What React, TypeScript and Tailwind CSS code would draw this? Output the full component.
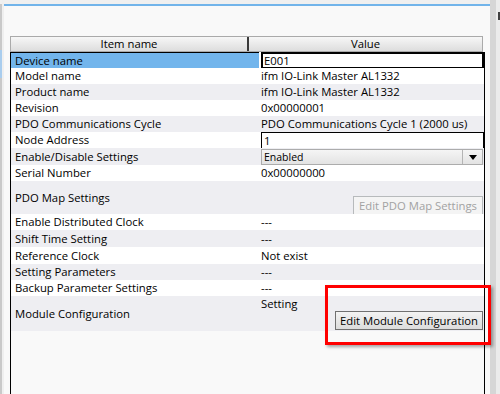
import { ReactNode } from "react"

type Row = {
  label: string
  h: string
  bg: string
  value?: ReactNode
  valueCls?: string
}

const white = "bg-white"
const grey = "bg-[#eeeef2]"

function DropArrow() {
  return (
    <svg width="8" height="5" viewBox="0 0 8 5">
      <path d="M0 0 L8 0 L4 5 Z" fill="#000" />
    </svg>
  )
}

const rows: Row[] = [
  {
    label: "Device name",
    h: "h-[15px]",
    bg: "bg-[#72b5ec]",
    valueCls: "pl-[11px] -mt-[1px]",
    value: (
      <div className="flex h-[17px] w-full bg-white pl-[2px]">
        <div className="flex-1 border-2 border-black bg-white pl-[1px] leading-[13px]">E001</div>
      </div>
    ),
  },
  { label: "Model name", h: "h-[16px]", bg: white, value: "ifm IO-Link Master AL1332" },
  { label: "Product name", h: "h-[16px]", bg: grey, value: "ifm IO-Link Master AL1332" },
  { label: "Revision", h: "h-[16px]", bg: white, value: "0x00000001" },
  { label: "PDO Communications Cycle", h: "h-[16px]", bg: grey, value: "PDO Communications Cycle 1 (2000 us)" },
  {
    label: "Node Address",
    h: "h-[16px]",
    bg: white,
    value: <div className="h-[17px] w-full border border-black bg-white pl-[2px] leading-[15px]">1</div>,
  },
  {
    label: "Enable/Disable Settings",
    h: "h-[17px]",
    bg: grey,
    valueCls: "pl-[13px] pr-[1px] pt-[1px]",
    value: (
      <div className="flex h-[16px] w-full border border-[#acacac] bg-linear-to-b from-[#f5f5f5] to-[#e3e3e3]">
        <span className="flex-1 pl-[2px] text-[10.5px] leading-[14px]">Enabled</span>
        <span className="flex w-[20px] items-center justify-center border-l border-[#b4b4b4]">
          <DropArrow />
        </span>
      </div>
    ),
  },
  { label: "Serial Number", h: "h-[16px]", bg: white, value: "0x00000000" },
  {
    label: "PDO Map Settings",
    h: "h-[33px]",
    bg: grey,
    valueCls: "items-end justify-end pr-[1px]",
    value: (
      <button className="-mb-[1px] h-[19px] w-[130px] whitespace-nowrap border border-[#b7babc] bg-[#f4f4f4] leading-[15px] text-[#a2a2a2]">
        Edit PDO Map Settings
      </button>
    ),
  },
  { label: "Enable Distributed Clock", h: "h-[16px]", bg: white, value: "---" },
  { label: "Shift Time Setting", h: "h-[17px]", bg: grey, value: "---" },
  { label: "Reference Clock", h: "h-[17px]", bg: white, value: "Not exist" },
  { label: "Setting Parameters", h: "h-[16px]", bg: grey, value: "---" },
  { label: "Backup Parameter Settings", h: "h-[16px]", bg: white, value: "---" },
  {
    label: "Module Configuration",
    h: "h-[35px]",
    bg: grey,
    valueCls: "flex-col items-stretch pl-[13px] pr-[1px]",
    value: (
      <>
        <span className="leading-[15px]">Setting</span>
        <button className="h-[19px] w-[148px] self-end whitespace-nowrap border border-[#707070] bg-linear-to-b from-[#f3f3f3] to-[#dcdcdc] leading-[15px] text-black">
          Edit Module Configuration
        </button>
      </>
    ),
  },
]

export default function App() {
  return (
    <div className="relative flex h-[394px] w-[500px] overflow-hidden bg-[#f0f0f0] font-['Open_Sans','Noto_Sans',sans-serif] text-[11.3px] text-black">
      {/* left edge */}
      <div className="flex w-[2px] flex-col">
        <div className="h-[4px] bg-[#f0f0f0]" />
        <div className="h-[46px] bg-[#c9c9c9]" />
        <div className="h-[28px] bg-[#a9cdee]" />
        <div className="flex-1 bg-[#c9c9c9]" />
      </div>
      <div className="w-[2px] bg-[#efefef]" />

      {/* main panel */}
      <div className="flex w-[486px] flex-col">
        <div className="h-[4px] bg-[#f0f0f0]" />
        <div className="h-[2px] bg-[#72b4ea]" />
        <div className="flex flex-1 flex-col bg-[#f9f9f9] pl-[6px] pr-[5px] pt-[30px]">
          {/* header */}
          <div className="mr-[2px] flex h-[16px] border border-[#aaaaaa] bg-linear-to-b from-[#f7f7f7] to-[#dddddd] leading-[14px]">
            <div className="w-[236px] text-center">Item name</div>
            <div className="w-[2px] bg-[#3a3a3a]" />
            <div className="flex-1 text-center">Value</div>
          </div>
          {/* body */}
          <div className="flex flex-1 flex-col border-l border-r border-t border-black">
            {rows.map((r) => (
              <div key={r.label} className={`flex ${r.h} ${r.bg}`}>
                <div className="flex w-[237px] items-center pl-[4px] leading-[16px]">{r.label}</div>
                <div className={`flex flex-1 ${r.valueCls ?? "items-center pl-[13px]"}`}>
                  {typeof r.value === "string" ? <span className="leading-[16px]">{r.value}</span> : r.value}
                </div>
              </div>
            ))}
          </div>
        </div>
      </div>

      {/* right edge */}
      <div className="w-[6px] bg-[#d6d6d6]" />
      <div className="relative w-[4px] bg-[#ebebeb]">
        <div className="absolute left-[2px] top-[12px] h-[8px] w-[2px] bg-[#404040]" />
      </div>

      {/* annotation */}
      <div className="absolute left-[325px] top-[285px] h-[60px] w-[166px] border-[3px] border-[#ff0000] shadow-[2px_2px_3px_rgba(0,0,0,0.35)]" />
    </div>
  )
}
